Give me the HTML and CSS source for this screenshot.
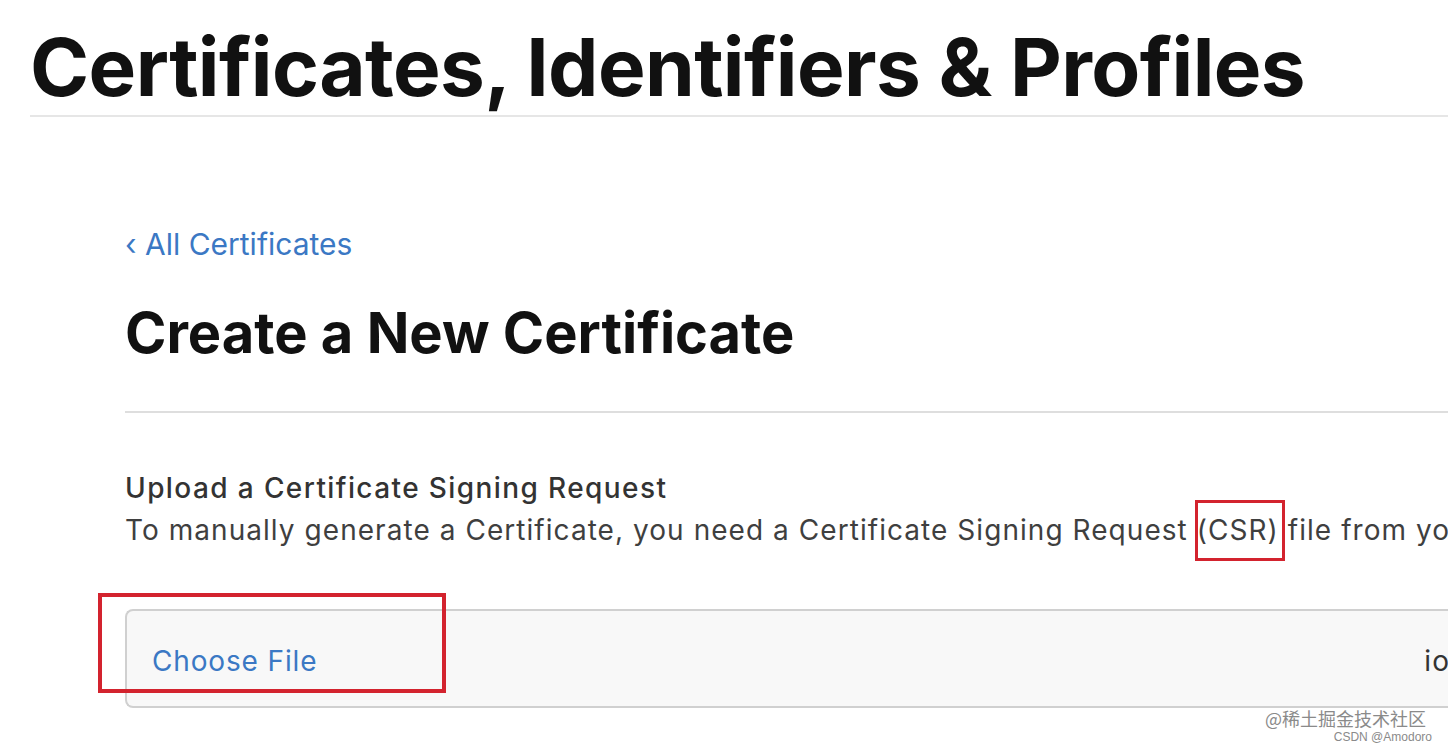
FILE: index.html
```html
<!DOCTYPE html>
<html>
<head>
<meta charset="utf-8">
<link rel="stylesheet" href="styles.css">
</head>
<body>
<header class="page-header">
  <h1 class="page-title">Certificates, Identifiers &amp; Profiles</h1>
</header>
<main class="content">
  <a class="back-link" href="#"><span class="chev">‹</span> All Certificates</a>
  <h2 class="section-title">Create a New Certificate</h2>
  <div class="form-area">
    <h3 class="upload-title">Upload a Certificate Signing Request</h3>
    <p class="upload-desc">To manually generate a Certificate, you need a Certificate Signing Request <span class="mark csr">(CSR)</span> file from your Mac.</p>
    <div class="file-box">
      <span class="choose">Choose File</span>
      <span class="file-name">ios_distribution.certSigningRequest</span>
      <span class="mark choose-mark"></span>
    </div>
  </div>
</main>
<div class="watermark">
  <div class="wm-main">@稀土掘金技术社区</div>
  <div class="wm-sub">CSDN @Amodoro</div>
</div>
</body>
</html>
```
FILE: styles.css
```css
html, body {
  margin: 0;
  padding: 0;
  background: #fff;
  overflow: hidden;
  width: 1448px;
  height: 750px;
}
body {
  font-family: Inter, "Liberation Sans", Arial, sans-serif;
  position: relative;
  color: #1d1d1f;
}
.page-header {
  margin-left: 30px;
  border-bottom: 2px solid #e6e6e6;
  height: 117px;
  box-sizing: border-box;
}
.page-title {
  margin: 0;
  padding-top: 22px;
  font-size: 80px;
  line-height: 90px;
  font-weight: 700;
  letter-spacing: -0.6px;
  color: #111;
  white-space: nowrap;
}
.content {
  margin-left: 125px;
  padding-top: 107px;
}
.back-link {
  display: block;
  color: #3b78c4;
  text-decoration: none;
  font-size: 30px;
  line-height: 40px;
  white-space: nowrap;
}
.section-title {
  margin: 39px 0 0;
  font-size: 56px;
  line-height: 60px;
  font-weight: 700;
  color: #111;
  white-space: nowrap;
  padding-bottom: 48px;
  border-bottom: 2px solid #dedede;
}
.form-area {
  padding-top: 55px;
}
.upload-title {
  margin: 0;
  font-size: 28px;
  font-weight: 500;
  line-height: 40px;
  letter-spacing: 1.4px;
  color: #333;
  white-space: nowrap;
}
.upload-desc {
  margin: 2px 0 0;
  font-size: 28px;
  line-height: 40px;
  letter-spacing: 1.05px;
  color: #3f3f3f;
  white-space: nowrap;
}
.mark {
  position: relative;
}
.csr::after {
  content: "";
  position: absolute;
  left: -2px;
  right: -6px;
  top: -13px;
  bottom: -14px;
  border: 3px solid #d3232e;
}
.file-box {
  position: relative;
  margin-top: 59px;
  height: 99px;
  box-sizing: border-box;
  border: 2px solid #d0d0d0;
  border-right: none;
  border-radius: 8px 0 0 8px;
  background: #f8f8f8;
  display: flex;
  align-items: center;
  padding-left: 25px;
  white-space: nowrap;
}
.choose {
  color: #3b78c4;
  font-size: 28px;
  letter-spacing: 0.85px;
  padding-top: 4px;
}
.file-name {
  margin-left: 1107px;
  font-size: 28px;
  letter-spacing: 1px;
  color: #333;
  padding-top: 4px;
}
.choose-mark {
  position: absolute;
  left: -29px;
  top: -18px;
  width: 348px;
  height: 100px;
  box-sizing: border-box;
  border: 4px solid #d3232e;
}
.watermark {
  position: absolute;
  right: 20px;
  top: 706px;
  text-align: right;
  color: #8a8a8a;
}
.wm-main {
  font-family: "Noto Sans CJK SC", sans-serif;
  font-size: 18px;
  line-height: 24px;
  margin-right: 2px;
}
.wm-sub {
  font-family: "Liberation Sans", Arial, sans-serif;
  font-size: 12px;
  line-height: 14px;
  margin-right: -4px;
}
```
